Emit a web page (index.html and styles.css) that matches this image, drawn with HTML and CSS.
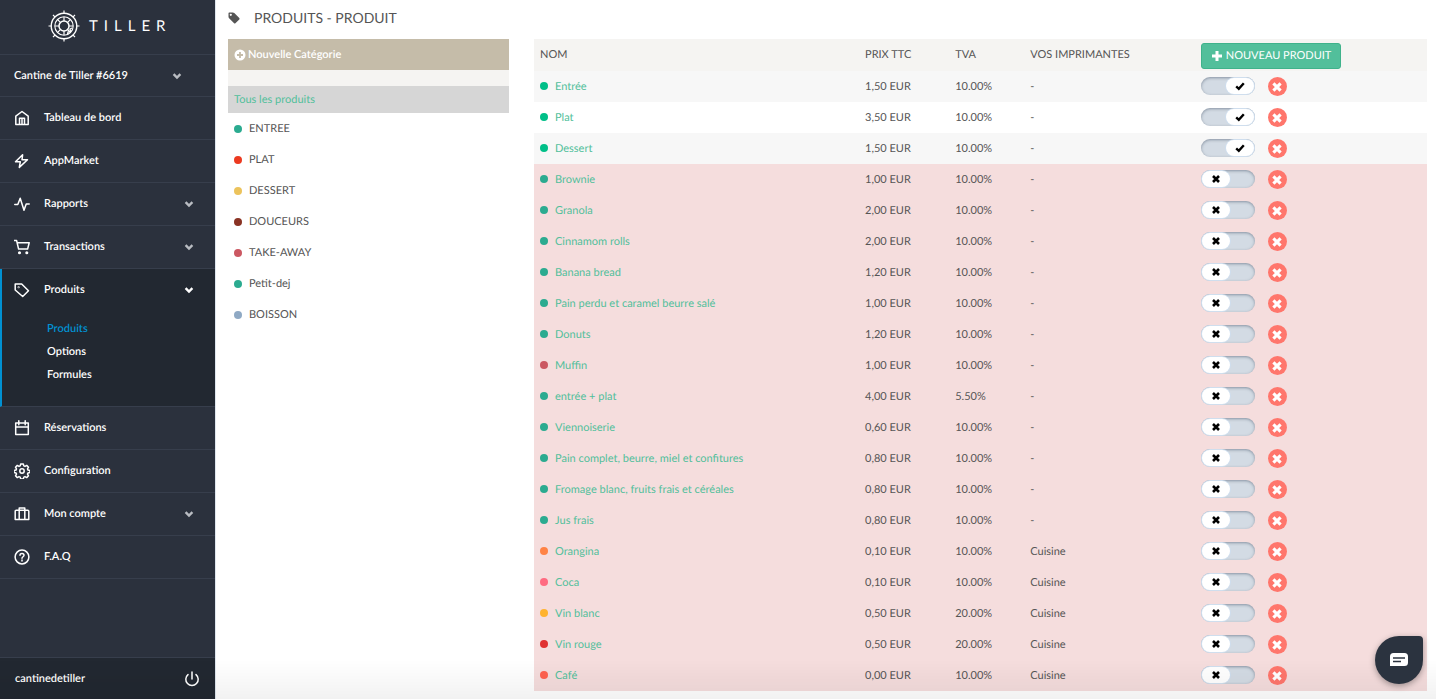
FILE: index.html
```html
<!DOCTYPE html>
<html lang="fr">
<head>
<meta charset="utf-8">
<meta name="viewport" content="width=device-width, initial-scale=1">
<title>Produits - Produit</title>
<link rel="stylesheet" href="styles.css">
</head>
<body>
<svg class="sprite" aria-hidden="true">
  <symbol id="cross" viewBox="0 0 10 10"><path d="M2 2l6 6M8 2l-6 6" fill="none" stroke="currentColor" stroke-width="2.6"/></symbol>
  <symbol id="check" viewBox="0 0 10 10"><path d="M1.2 5.4l2.6 2.4 5-5.6" fill="none" stroke="currentColor" stroke-width="2.4"/></symbol>
  <symbol id="chevron" viewBox="0 0 10 10"><path d="M1.600 3.200L5 6.600l3.400-3.400" fill="none" stroke="currentColor" stroke-width="2.4"/></symbol>
</svg>
<div class="app">
  <aside class="sidebar">
    <a class="brand" href="#" aria-label="Tiller">
      <svg class="brand-mark" viewBox="0 0 32 32" fill="none" stroke="currentColor">
        <circle cx="16" cy="16" r="12.800" stroke-width="1.400"/>
        <circle cx="16" cy="16" r="9.200" stroke-width="1.100"/>
        <circle cx="16" cy="16" r="5" stroke-width="1.500"/>
        <path stroke-width="1.200" d="M16 .5v3M16 28.500v3M.5 16h3M28.500 16h3M5 5l2.200 2.200M24.800 24.800L27 27M27 5l-2.200 2.200M5 27l2.200-2.200M16 7v4M16 21v4M7 16h4M21 16h4M9.600 9.600l2.800 2.800M22.400 9.600l-2.800 2.800M9.600 22.400l2.800-2.800M22 22l-2.500-2.500"/>
        <path stroke-width="1.300" d="M24 18l-2 1 .5 2.500-2.500.5-.5 2.500"/>
      </svg>
      <span class="brand-name">TILLER</span>
    </a>
    <button class="store" type="button"><span>Cantine de Tiller #6619</span><svg class="chevron"><use href="#chevron"/></svg></button>
    <nav class="nav">
      <a class="nav-item" href="#"><svg class="icon" viewBox="0 0 16 16"><path d="M1.800 6.200L8 1.500l6.200 4.700v8.300H1.800zM5.500 14.500V8.300h5v6.200M8 9v5"/></svg><span>Tableau de bord</span></a>
      <a class="nav-item" href="#"><svg class="icon" viewBox="0 0 16 16"><path d="M8.600 1.800L1.500 8.800h4.800l-1 5.600 8.200-7.600H8z"/></svg><span>AppMarket</span></a>
      <a class="nav-item" href="#"><svg class="icon" viewBox="0 0 16 16"><path d="M.8 8.400h3L6.200 2.200l3.800 12 2.200-6.200h3"/></svg><span>Rapports</span><svg class="chevron"><use href="#chevron"/></svg></a>
      <a class="nav-item" href="#"><svg class="icon" viewBox="0 0 16 16"><path d="M0 1.500h2.600l2 8.600h9l1.600-6.300H3.200"/><circle cx="5.500" cy="13.700" r=".8"/><circle cx="12.800" cy="13.700" r=".8"/></svg><span>Transactions</span><svg class="chevron"><use href="#chevron"/></svg></a>
      <div class="nav-group">
        <a class="nav-item" href="#"><svg class="icon" viewBox="0 0 16 16"><path d="M1.200 2h6.500l6.800 6.700-5.800 5.800L1.200 8z"/><circle cx="4.600" cy="5.200" r=".3"/></svg><span>Produits</span><svg class="chevron"><use href="#chevron"/></svg></a>
        <ul class="subnav">
          <li><a class="current" href="#">Produits</a></li>
          <li><a href="#">Options</a></li>
          <li><a href="#">Formules</a></li>
        </ul>
      </div>
      <a class="nav-item" href="#"><svg class="icon" viewBox="0 0 16 16"><path d="M1.700 3h12.600v11.500H1.700zM1.700 7h12.600M4.800.8v4M11.200.8v4"/></svg><span>Réservations</span></a>
      <a class="nav-item" href="#"><svg class="icon" viewBox="0 0 16 16"><circle cx="8" cy="8" r="2.200"/><path d="M6.700 1h2.600l.5 1.900 1.200.5 1.700-1 1.800 1.800-1 1.700.5 1.200 1.900.5v1.800l-1.900.5-.5 1.200 1 1.700-1.800 1.800-1.700-1-1.200.5-.5 1.900H6.700l-.5-1.900-1.200-.5-1.700 1-1.800-1.800 1-1.700-.5-1.200L.1 9.400V7.600L2 7.100l.5-1.200-1-1.700 1.800-1.800 1.700 1 1.200-.5z"/></svg><span>Configuration</span></a>
      <a class="nav-item" href="#"><svg class="icon" viewBox="0 0 16 16"><path d="M2.200 4.200h11.600a1 1 0 0 1 1 1v8.300H1.200V5.200a1 1 0 0 1 1-1zM5.200 13.500V2h5.600v11.500"/></svg><span>Mon compte</span><svg class="chevron"><use href="#chevron"/></svg></a>
      <a class="nav-item" href="#"><svg class="icon" viewBox="0 0 16 16"><circle cx="8" cy="8" r="6.900"/><path d="M6 6.300C6 3.800 10 4 10 6.300 10 7.800 8 7.700 8 9.300M8 11v1"/></svg><span>F.A.Q</span></a>
    </nav>
    <div class="account">
      <span>cantinedetiller</span>
      <button class="power" type="button" aria-label="Déconnexion"><svg class="icon" viewBox="0 0 16 16"><path d="M8 1v7M4 3.600a6.200 6.200 0 1 0 8 0"/></svg></button>
    </div>
  </aside>

  <main class="main">
    <h1 class="title"><svg class="title-icon" viewBox="0 0 12 12"><path fill="currentColor" fill-rule="evenodd" d="M.5 1.300a.8.8 0 0 1 .8-.8h3.500c.6 0 1.100.2 1.500.6l5 5c.4.400.4.900 0 1.300l-3.900 3.900c-.4.400-.9.400-1.300 0l-5-5A2 2 0 0 1 .5 4.800zM2.800 1.700a1.100 1.100 0 1 0 0 2.200 1.100 1.100 0 0 0 0-2.200z"/></svg><span>PRODUITS - PRODUIT</span></h1>
    <div class="columns">
      <section class="categories">
        <button class="new-category" type="button"><svg class="plus-circle" viewBox="0 0 12 12"><circle cx="6" cy="6" r="5.500" fill="currentColor"/><path d="M6 3v6M3 6h6" stroke="#c5bca9" stroke-width="1.800"/></svg><span>Nouvelle Catégorie</span></button>
        <a class="all-products" href="#">Tous les produits</a>
        <ul class="category-list">
          <li><span class="dot teal"></span>ENTREE</li>
          <li><span class="dot red"></span>PLAT</li>
          <li><span class="dot yellow"></span>DESSERT</li>
          <li><span class="dot brown"></span>DOUCEURS</li>
          <li><span class="dot rose"></span>TAKE-AWAY</li>
          <li><span class="dot teal"></span>Petit-dej</li>
          <li><span class="dot blue"></span>BOISSON</li>
        </ul>
      </section>

      <table class="products">
        <colgroup><col class="c-name"><col class="c-price"><col class="c-vat"><col class="c-printer"><col class="c-actions"></colgroup>
        <thead>
          <tr><th>NOM</th><th>PRIX TTC</th><th>TVA</th><th>VOS IMPRIMANTES</th><th><button class="new-product" type="button"><svg class="plus" viewBox="0 0 12 12"><path d="M6 1v10M1 6h10" stroke="currentColor" stroke-width="3"/></svg><span>NOUVEAU PRODUIT</span></button></th></tr>
        </thead>
        <tbody>
          <tr><td><span class="dot green"></span><a href="#">Entrée</a></td><td>1,50 EUR</td><td>10.00%</td><td>-</td><td><div class="actions"><label class="switch"><input type="checkbox" aria-label="Activer Entrée" checked><span class="knob"><svg><use href="#check"/></svg></span></label><button class="remove" type="button" aria-label="Supprimer Entrée"><svg><use href="#cross"/></svg></button></div></td></tr>
          <tr><td><span class="dot green"></span><a href="#">Plat</a></td><td>3,50 EUR</td><td>10.00%</td><td>-</td><td><div class="actions"><label class="switch"><input type="checkbox" aria-label="Activer Plat" checked><span class="knob"><svg><use href="#check"/></svg></span></label><button class="remove" type="button" aria-label="Supprimer Plat"><svg><use href="#cross"/></svg></button></div></td></tr>
          <tr><td><span class="dot green"></span><a href="#">Dessert</a></td><td>1,50 EUR</td><td>10.00%</td><td>-</td><td><div class="actions"><label class="switch"><input type="checkbox" aria-label="Activer Dessert" checked><span class="knob"><svg><use href="#check"/></svg></span></label><button class="remove" type="button" aria-label="Supprimer Dessert"><svg><use href="#cross"/></svg></button></div></td></tr>
          <tr class="off"><td><span class="dot teal"></span><a href="#">Brownie</a></td><td>1,00 EUR</td><td>10.00%</td><td>-</td><td><div class="actions"><label class="switch"><input type="checkbox" aria-label="Activer Brownie"><span class="knob"><svg><use href="#cross"/></svg></span></label><button class="remove" type="button" aria-label="Supprimer Brownie"><svg><use href="#cross"/></svg></button></div></td></tr>
          <tr class="off"><td><span class="dot teal"></span><a href="#">Granola</a></td><td>2,00 EUR</td><td>10.00%</td><td>-</td><td><div class="actions"><label class="switch"><input type="checkbox" aria-label="Activer Granola"><span class="knob"><svg><use href="#cross"/></svg></span></label><button class="remove" type="button" aria-label="Supprimer Granola"><svg><use href="#cross"/></svg></button></div></td></tr>
          <tr class="off"><td><span class="dot teal"></span><a href="#">Cinnamom rolls</a></td><td>2,00 EUR</td><td>10.00%</td><td>-</td><td><div class="actions"><label class="switch"><input type="checkbox" aria-label="Activer Cinnamom rolls"><span class="knob"><svg><use href="#cross"/></svg></span></label><button class="remove" type="button" aria-label="Supprimer Cinnamom rolls"><svg><use href="#cross"/></svg></button></div></td></tr>
          <tr class="off"><td><span class="dot teal"></span><a href="#">Banana bread</a></td><td>1,20 EUR</td><td>10.00%</td><td>-</td><td><div class="actions"><label class="switch"><input type="checkbox" aria-label="Activer Banana bread"><span class="knob"><svg><use href="#cross"/></svg></span></label><button class="remove" type="button" aria-label="Supprimer Banana bread"><svg><use href="#cross"/></svg></button></div></td></tr>
          <tr class="off"><td><span class="dot teal"></span><a href="#">Pain perdu et caramel beurre salé</a></td><td>1,00 EUR</td><td>10.00%</td><td>-</td><td><div class="actions"><label class="switch"><input type="checkbox" aria-label="Activer Pain perdu"><span class="knob"><svg><use href="#cross"/></svg></span></label><button class="remove" type="button" aria-label="Supprimer Pain perdu"><svg><use href="#cross"/></svg></button></div></td></tr>
          <tr class="off"><td><span class="dot teal"></span><a href="#">Donuts</a></td><td>1,20 EUR</td><td>10.00%</td><td>-</td><td><div class="actions"><label class="switch"><input type="checkbox" aria-label="Activer Donuts"><span class="knob"><svg><use href="#cross"/></svg></span></label><button class="remove" type="button" aria-label="Supprimer Donuts"><svg><use href="#cross"/></svg></button></div></td></tr>
          <tr class="off"><td><span class="dot rose"></span><a href="#">Muffin</a></td><td>1,00 EUR</td><td>10.00%</td><td>-</td><td><div class="actions"><label class="switch"><input type="checkbox" aria-label="Activer Muffin"><span class="knob"><svg><use href="#cross"/></svg></span></label><button class="remove" type="button" aria-label="Supprimer Muffin"><svg><use href="#cross"/></svg></button></div></td></tr>
          <tr class="off"><td><span class="dot teal"></span><a href="#">entrée + plat</a></td><td>4,00 EUR</td><td>5.50%</td><td>-</td><td><div class="actions"><label class="switch"><input type="checkbox" aria-label="Activer entrée + plat"><span class="knob"><svg><use href="#cross"/></svg></span></label><button class="remove" type="button" aria-label="Supprimer entrée + plat"><svg><use href="#cross"/></svg></button></div></td></tr>
          <tr class="off"><td><span class="dot teal"></span><a href="#">Viennoiserie</a></td><td>0,60 EUR</td><td>10.00%</td><td>-</td><td><div class="actions"><label class="switch"><input type="checkbox" aria-label="Activer Viennoiserie"><span class="knob"><svg><use href="#cross"/></svg></span></label><button class="remove" type="button" aria-label="Supprimer Viennoiserie"><svg><use href="#cross"/></svg></button></div></td></tr>
          <tr class="off"><td><span class="dot teal"></span><a href="#">Pain complet, beurre, miel et confitures</a></td><td>0,80 EUR</td><td>10.00%</td><td>-</td><td><div class="actions"><label class="switch"><input type="checkbox" aria-label="Activer Pain complet"><span class="knob"><svg><use href="#cross"/></svg></span></label><button class="remove" type="button" aria-label="Supprimer Pain complet"><svg><use href="#cross"/></svg></button></div></td></tr>
          <tr class="off"><td><span class="dot teal"></span><a href="#">Fromage blanc, fruits frais et céréales</a></td><td>0,80 EUR</td><td>10.00%</td><td>-</td><td><div class="actions"><label class="switch"><input type="checkbox" aria-label="Activer Fromage blanc"><span class="knob"><svg><use href="#cross"/></svg></span></label><button class="remove" type="button" aria-label="Supprimer Fromage blanc"><svg><use href="#cross"/></svg></button></div></td></tr>
          <tr class="off"><td><span class="dot teal"></span><a href="#">Jus frais</a></td><td>0,80 EUR</td><td>10.00%</td><td>-</td><td><div class="actions"><label class="switch"><input type="checkbox" aria-label="Activer Jus frais"><span class="knob"><svg><use href="#cross"/></svg></span></label><button class="remove" type="button" aria-label="Supprimer Jus frais"><svg><use href="#cross"/></svg></button></div></td></tr>
          <tr class="off"><td><span class="dot orange"></span><a href="#">Orangina</a></td><td>0,10 EUR</td><td>10.00%</td><td>Cuisine</td><td><div class="actions"><label class="switch"><input type="checkbox" aria-label="Activer Orangina"><span class="knob"><svg><use href="#cross"/></svg></span></label><button class="remove" type="button" aria-label="Supprimer Orangina"><svg><use href="#cross"/></svg></button></div></td></tr>
          <tr class="off"><td><span class="dot pink"></span><a href="#">Coca</a></td><td>0,10 EUR</td><td>10.00%</td><td>Cuisine</td><td><div class="actions"><label class="switch"><input type="checkbox" aria-label="Activer Coca"><span class="knob"><svg><use href="#cross"/></svg></span></label><button class="remove" type="button" aria-label="Supprimer Coca"><svg><use href="#cross"/></svg></button></div></td></tr>
          <tr class="off"><td><span class="dot amber"></span><a href="#">Vin blanc</a></td><td>0,50 EUR</td><td>20.00%</td><td>Cuisine</td><td><div class="actions"><label class="switch"><input type="checkbox" aria-label="Activer Vin blanc"><span class="knob"><svg><use href="#cross"/></svg></span></label><button class="remove" type="button" aria-label="Supprimer Vin blanc"><svg><use href="#cross"/></svg></button></div></td></tr>
          <tr class="off"><td><span class="dot crimson"></span><a href="#">Vin rouge</a></td><td>0,50 EUR</td><td>20.00%</td><td>Cuisine</td><td><div class="actions"><label class="switch"><input type="checkbox" aria-label="Activer Vin rouge"><span class="knob"><svg><use href="#cross"/></svg></span></label><button class="remove" type="button" aria-label="Supprimer Vin rouge"><svg><use href="#cross"/></svg></button></div></td></tr>
          <tr class="off"><td><span class="dot coral"></span><a href="#">Café</a></td><td>0,00 EUR</td><td>10.00%</td><td>Cuisine</td><td><div class="actions"><label class="switch"><input type="checkbox" aria-label="Activer Café"><span class="knob"><svg><use href="#cross"/></svg></span></label><button class="remove" type="button" aria-label="Supprimer Café"><svg><use href="#cross"/></svg></button></div></td></tr>
        </tbody>
      </table>
    </div>
  </main>
</div>
<div class="fade"></div>
<button class="chat" type="button" aria-label="Ouvrir le chat"><svg viewBox="0 0 20 16"><path fill="#fff" d="M4.500 1h11A3.500 3.500 0 0 1 19 4.500v6a3.500 3.500 0 0 1-3.500 3.500H1V4.500A3.500 3.500 0 0 1 4.500 1z"/><path stroke="#2b333f" stroke-width="1.500" d="M4 6h12M4 9.500h8"/></svg></button>
</body>
</html>
```
FILE: styles.css
```css
* { box-sizing: border-box; }

body {
  margin: 0;
  background: #fff;
  color: #555;
  font: 11px/18px Lato, "Liberation Sans", sans-serif;
  text-rendering: geometricPrecision;
}

a { color: inherit; text-decoration: none; }
ul { list-style: none; margin: 0; padding: 0; }
button { font: inherit; color: inherit; text-rendering: inherit; border: 0; background: none; padding: 0; cursor: pointer; }
svg { display: block; flex: none; }
.sprite { position: absolute; width: 0; height: 0; }

.app { display: flex; min-height: 100vh; }

/* Sidebar */
.sidebar {
  position: sticky;
  top: 0;
  display: flex;
  flex-direction: column;
  flex: none;
  width: 216px;
  height: 100vh;
  background: #2b313d;
  border-right: 1px solid #dfe6ee;
  color: #fff;
  font-weight: 600;
}

.brand {
  display: flex;
  align-items: center;
  gap: 9px;
  height: 55px;
  padding: 0 0 2px 48px;
  border-bottom: 1px solid #373e4c;
}
.brand-mark { width: 32px; height: 32px; }
.brand-name { font-size: 15px; font-weight: 400; letter-spacing: 6px; }

.store {
  display: flex;
  align-items: center;
  justify-content: space-between;
  height: 42px;
  padding: 0 33px 0 14px;
  border-bottom: 1px solid #373e4c;
}

.nav { display: flex; flex-direction: column; flex: 1; }
.nav-item {
  display: flex;
  align-items: center;
  gap: 14px;
  height: 43px;
  padding: 0 21px 0 14px;
  border-bottom: 1px solid #373e4c;
}
.icon {
  width: 16px;
  height: 16px;
  fill: none;
  stroke: currentColor;
  stroke-width: 1.5;
  stroke-linejoin: round;
  stroke-linecap: round;
}
.chevron { width: 10px; height: 10px; margin-left: auto; color: #b9bcc2; }

.nav-group {
  padding-bottom: 20px;
  background: #222831;
  border-left: 2px solid #0191d2;
  border-bottom: 1px solid #373e4c;
}
.nav-group .nav-item { height: 41px; border: 0; padding-left: 12px; }
.nav-group .chevron { color: #fff; }
.subnav { padding: 7px 0 0 45px; }
.subnav a { display: block; line-height: 23px; }
.subnav .current { color: #0191d2; }

.account {
  display: flex;
  align-items: center;
  justify-content: space-between;
  height: 42px;
  padding: 0 15px;
  background: #222831;
  border-top: 1px solid #373e4c;
}

/* Content */
.main { flex: 1; min-width: 0; padding: 0 9px 8px 12px; }

.title {
  display: flex;
  align-items: center;
  gap: 14px;
  height: 39px;
  margin: 0;
  padding-bottom: 3px;
  font-size: 14px;
  font-weight: 400;
}
.title-icon { width: 12px; height: 12px; }

.columns {
  display: grid;
  grid-template-columns: minmax(0, 281fr) minmax(0, 893fr);
  gap: 25px;
  align-items: start;
}

.categories { background: #fff; }
.new-category {
  display: flex;
  align-items: center;
  gap: 2px;
  width: 100%;
  height: 31px;
  padding: 0 6px;
  background: #c5bca9;
  color: #fff;
  font-weight: 600;
}
.plus-circle { width: 12px; height: 12px; }
.all-products {
  display: block;
  padding: 5px 6px 4px;
  border-top: 16px solid #f5f4f2;
  background: #d6d6d6;
  color: #52bf9b;
}
.category-list li {
  display: flex;
  align-items: center;
  gap: 7px;
  height: 31px;
  padding: 0 6px;
}

.dot { display: inline-block; flex: none; width: 8px; height: 8px; border-radius: 50%; }
.teal { background: #2bab90; }
.green { background: #00bf88; }
.red { background: #ec3a20; }
.yellow { background: #ecc35c; }
.brown { background: #8a3324; }
.rose { background: #cb5862; }
.blue { background: #8fa9c4; }
.orange { background: #ff8345; }
.pink { background: #ff6b81; }
.amber { background: #ffb32f; }
.crimson { background: #e03131; }
.coral { background: #ff6250; }

.products { width: 100%; table-layout: fixed; border-collapse: collapse; }
.c-name { width: 36.4%; }
.c-price { width: 10.1%; }
.c-vat { width: 8.4%; }
.c-printer { width: 19.1%; }
.c-actions { width: 26%; }
.products th, .products td { padding: 0 6px; text-align: left; font-weight: 400; }
.products th { height: 32px; background: #f5f4f2; }
.products td { height: 31px; }
.products tbody tr:nth-child(odd) { background: #f7f7f7; }
.products tbody tr.off { background: #f5dddd; }
.products td a { color: #52bf9b; }
.products td .dot { margin-right: 7px; }

.new-product {
  display: flex;
  align-items: center;
  gap: 3px;
  height: 26px;
  margin-top: 2px;
  padding: 0 9px;
  background: #52bf9b;
  border: 1px solid #3fb28b;
  border-radius: 3px;
  color: #fff;
}
.plus { width: 12px; height: 12px; }

.actions { display: flex; align-items: flex-start; gap: 13px; }
.switch {
  display: flex;
  width: 54px;
  height: 18px;
  padding: 1px;
  border-radius: 9px;
  background: #d3dbe4;
  box-shadow: inset 0 1px 3px rgba(60, 75, 95, .5);
  cursor: pointer;
}
.switch input { appearance: none; width: 0; height: 0; margin: 0; }
.knob {
  display: flex;
  align-items: center;
  justify-content: center;
  width: 28px;
  height: 16px;
  border-radius: 8px;
  background: #fff;
  box-shadow: 0 0 0 1px #cfdeee;
  color: #000;
}
.switch input:checked + .knob { margin-left: auto; }
.knob svg { width: 10px; height: 10px; }
.remove {
  display: flex;
  align-items: center;
  justify-content: center;
  width: 19px;
  height: 19px;
  padding-top: 1px;
  border-radius: 50%;
  background: #ff766c;
  color: #fff;
}
.remove svg { width: 12px; height: 12px; }

/* Overlays */
.fade {
  position: fixed;
  inset: auto 0 0;
  height: 40px;
  background: linear-gradient(transparent, rgba(0, 0, 0, .05));
  pointer-events: none;
}
.chat {
  position: fixed;
  right: 13px;
  bottom: 15px;
  display: flex;
  align-items: center;
  justify-content: center;
  width: 48px;
  height: 48px;
  border-radius: 24px 4px 24px 24px;
  background: #2b333f;
  box-shadow: 0 2px 6px rgba(0, 0, 0, .35);
}
.chat svg { width: 20px; height: 16px; }
```
